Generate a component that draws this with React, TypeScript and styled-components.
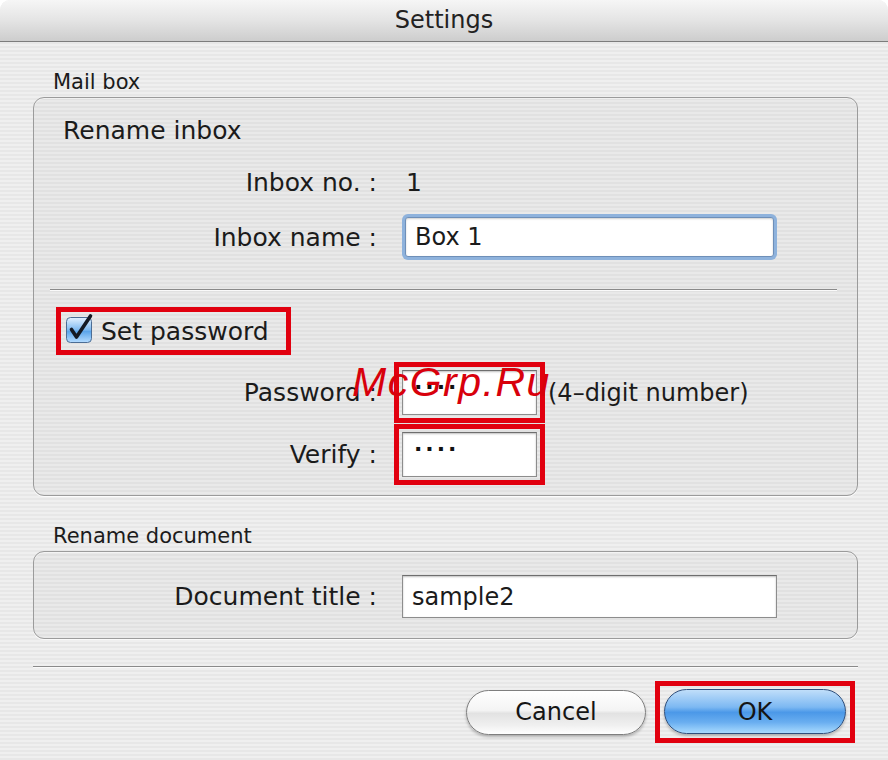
import React from "react";
import styled, { createGlobalStyle, css } from "styled-components";

const GlobalStyle = createGlobalStyle`
  html, body {
    margin: 0;
    padding: 0;
    background: #ffffff;
  }
  body {
    font-family: "DejaVu Sans", "Liberation Sans", sans-serif;
    color: #1b1b1b;
  }
`;

const RED = "#e1000f";

const highlight = css`
  outline: 5px solid ${RED};
  outline-offset: 3px;
`;

const Settings = () => {
  return (
    <Window>
      <GlobalStyle />
      <TitleBar>Settings</TitleBar>
      <Body>
        <SectionLabel>Mail box</SectionLabel>
        <GroupBox>
          <Heading>Rename inbox</Heading>
          <FormRow $h={36} $mt={16}>
            <Label>Inbox no. :</Label>
            <Value>1</Value>
          </FormRow>
          <FormRow $h={46} $mt={14}>
            <Label>Inbox name :</Label>
            <TextField $w={375} $focused>
              Box 1
            </TextField>
          </FormRow>
          <Separator $inset />
          <CheckHighlight>
            <CheckBox />
            <span>Set password</span>
          </CheckHighlight>
          <FormRow $h={45} $mt={15}>
            <Label>Password :</Label>
            <FieldWithNote>
              <TextField $w={135} $red>
                <Dots>····</Dots>
              </TextField>
              <Note>(4–digit number)</Note>
            </FieldWithNote>
          </FormRow>
          <FormRow $h={45} $mt={17}>
            <Label>Verify :</Label>
            <TextField $w={135} $red>
              <Dots>····</Dots>
            </TextField>
          </FormRow>
          <BoxBottom $h={18} />
        </GroupBox>

        <SectionLabel $mt={28}>Rename document</SectionLabel>
        <GroupBox>
          <FormRow $h={43} $mt={23}>
            <Label>Document title :</Label>
            <TextField $w={375}>sample2</TextField>
          </FormRow>
          <BoxBottom $h={20} />
        </GroupBox>

        <Separator $mt={27} />
        <ButtonBar>
          <PushButton>Cancel</PushButton>
          <RedFrame>
            <PushButton $primary>OK</PushButton>
          </RedFrame>
        </ButtonBar>
      </Body>
      <Watermark>McGrp.Ru</Watermark>
    </Window>
  );
};

const CheckBox = () => (
  <svg width="30" height="32" viewBox="0 0 30 32">
    <defs>
      <linearGradient id="cbFill" x1="0" y1="0" x2="0" y2="1">
        <stop offset="0" stopColor="#e4f2ff" />
        <stop offset="0.5" stopColor="#7db9f0" />
        <stop offset="0.55" stopColor="#5aa4ea" />
        <stop offset="1" stopColor="#b5dcff" />
      </linearGradient>
    </defs>
    <rect x="1.5" y="5.5" width="25" height="25" rx="4" fill="url(#cbFill)" stroke="#4c6d94" />
    <path d="M6.5 17.5 L11.5 25 L25.5 4" fill="none" stroke="#141a24" strokeWidth="3.6" strokeLinecap="round" strokeLinejoin="round" />
  </svg>
);

export default function App() {
  return <Settings />;
}

const Window = styled.div`
  position: relative;
  width: 888px;
  height: 760px;
  overflow: hidden;
  border-radius: 10px 10px 0 0;
  background: repeating-linear-gradient(
    to bottom,
    #efefef 0px,
    #efefef 2px,
    #e7e7e7 2px,
    #e7e7e7 4px
  );
`;

const TitleBar = styled.div`
  box-sizing: border-box;
  height: 42px;
  padding-bottom: 1px;
  border-bottom: 1px solid #7c7c7c;
  background: linear-gradient(to bottom, #f6f6f6 0%, #e4e4e4 50%, #cdcdcd 100%);
  display: flex;
  align-items: center;
  justify-content: center;
  font-size: 24px;
  color: #222;
`;

const Body = styled.div`
  padding: 28px 30px 0 33px;
  display: flex;
  flex-direction: column;
`;

const SectionLabel = styled.div<{ $mt?: number }>`
  margin-top: ${(p) => p.$mt ?? 0}px;
  padding-left: 20px;
  height: 24px;
  line-height: 24px;
  font-size: 21px;
  margin-bottom: 3px;
`;

const GroupBox = styled.div`
  display: flex;
  flex-direction: column;
  border: 1px solid #9b9b9b;
  border-radius: 11px;
  background: rgba(0, 0, 0, 0.025);
  box-shadow: inset 0 1px 0 rgba(255, 255, 255, 0.5), 0 1px 0 rgba(255, 255, 255, 0.8);
`;

const Heading = styled.div`
  margin-top: 16px;
  height: 34px;
  line-height: 34px;
  padding-left: 29px;
  font-size: 25px;
`;

const FormRow = styled.div<{ $h: number; $mt: number }>`
  display: grid;
  grid-template-columns: 343px auto;
  column-gap: 25px;
  align-items: center;
  height: ${(p) => p.$h}px;
  margin-top: ${(p) => p.$mt}px;
  font-size: 25px;
`;

const Label = styled.div`
  text-align: right;
  white-space: nowrap;
`;

const Value = styled.div`
  padding-left: 4px;
`;

const TextField = styled.div<{ $w: number; $focused?: boolean; $red?: boolean }>`
  box-sizing: border-box;
  width: ${(p) => p.$w}px;
  height: 100%;
  background: #ffffff;
  border: 1px solid #8d8d8d;
  border-top-color: #6e6e6e;
  box-shadow: inset 0 1px 2px rgba(0, 0, 0, 0.25);
  font-size: 24px;
  padding-left: 9px;
  display: flex;
  align-items: center;
  white-space: nowrap;
  ${(p) =>
    p.$focused &&
    css`
      border: 1px solid #6e8fb8;
      border-radius: 3px;
      box-shadow: 0 0 0 3px #8eb2dc, inset 0 1px 2px rgba(0, 0, 0, 0.2);
      height: 40px;
      width: ${p.$w - 6}px;
      margin-left: 3px;
    `}
  ${(p) => p.$red && highlight}
`;

const Dots = styled.span`
  font-size: 22px;
  font-weight: bold;
  letter-spacing: 3px;
  margin-top: -12px;
  margin-left: 2px;
  color: #111;
`;

const FieldWithNote = styled.div`
  display: flex;
  align-items: center;
  height: 100%;
`;

const Note = styled.span`
  margin-left: 11px;
  font-size: 24px;
  white-space: nowrap;
`;

const Separator = styled.div<{ $inset?: boolean; $mt?: number }>`
  height: 1px;
  background: #8a8a8a;
  border-bottom: 1px solid #fafafa;
  margin: ${(p) => (p.$inset ? "29px 20px 0 16px" : `${p.$mt ?? 0}px 0 0 0`)};
`;

const CheckHighlight = styled.div`
  align-self: flex-start;
  margin: 16px 0 0 22px;
  height: 48px;
  box-sizing: border-box;
  border: 5px solid ${RED};
  padding: 0 17px 0 4px;
  display: flex;
  align-items: center;
  gap: 6px;
  font-size: 25px;

  svg {
    margin-top: -6px;
  }
`;

const BoxBottom = styled.div<{ $h: number }>`
  height: ${(p) => p.$h}px;
`;

const ButtonBar = styled.div`
  display: flex;
  justify-content: flex-end;
  align-items: center;
  gap: 9px;
  margin-top: 13px;
  padding-right: 3px;
`;

const RedFrame = styled.div`
  border: 5px solid ${RED};
  padding: 3px 4px 4px;
  display: flex;
`;

const PushButton = styled.button<{ $primary?: boolean }>`
  width: ${(p) => (p.$primary ? 182 : 180)}px;
  height: 45px;
  border-radius: 23px;
  font-family: "DejaVu Sans", "Liberation Sans", sans-serif;
  font-size: 24px;
  color: #151515;
  padding: 0;
  border: 1px solid ${(p) => (p.$primary ? "#2f4f7c" : "#7f7f7f")};
  background: ${(p) =>
    p.$primary
      ? "linear-gradient(to bottom, #c0defa 0%, #7cb8f2 40%, #4b98e8 52%, #69aef0 75%, #a9dbff 100%)"
      : "linear-gradient(to bottom, #ffffff 0%, #f4f4f4 45%, #e2e2e2 52%, #f0f0f0 80%, #ffffff 100%)"};
  box-shadow: 0 2px 3px rgba(0, 0, 0, 0.25);
`;

const Watermark = styled.div`
  position: absolute;
  left: 352px;
  top: 359px;
  font-family: "Liberation Sans", Arial, sans-serif;
  font-style: italic;
  font-size: 41px;
  letter-spacing: 1.5px;
  color: #d8000c;
  pointer-events: none;
`;
